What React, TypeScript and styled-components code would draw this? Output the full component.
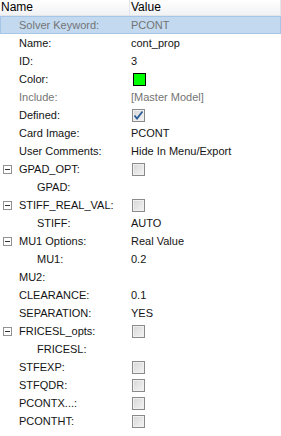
import styled, { createGlobalStyle } from 'styled-components';

const Global = createGlobalStyle`
    body {
        margin: 0;
        background: #ffffff;
        font-family: "Liberation Sans", Arial, sans-serif;
    }
`;

const Grid = styled.div`
    width: 281px;
    height: 436px;
    background: #ffffff;
    font-size: 11px;
    color: #141414;
    overflow: hidden;
`;

const Header = styled.div`
    display: grid;
    grid-template-columns: 130px 1fr;
    height: 16px;
    background: linear-gradient(#ffffff, #f1f2f4);
    border-bottom: 1px solid #e3e5e8;
    box-sizing: border-box;
    font-size: 12px;
`;

const HeaderCell = styled.div`
    padding-left: 1px;
    line-height: 15px;
    color: #000;
    border-right: 1px solid #e3e5e8;
`;

const Row = styled.div<{ $selected?: boolean }>`
    display: grid;
    grid-template-columns: 130px 1fr;
    height: 18px;
    align-items: center;
    background: ${p => (p.$selected ? '#c2d9f0' : 'transparent')};
    box-shadow: ${p => (p.$selected ? 'inset 0 0 0 1px #a6c6e8' : 'none')};
`;

const NameCell = styled.div<{ $indent: number; $muted?: boolean }>`
    display: flex;
    align-items: center;
    height: 18px;
    padding-left: ${p => p.$indent}px;
    color: ${p => (p.$muted ? '#747474' : '#141414')};
    white-space: nowrap;
`;

const ValueCell = styled.div<{ $muted?: boolean }>`
    display: flex;
    align-items: center;
    height: 18px;
    padding-left: 1px;
    color: ${p => (p.$muted ? '#747474' : '#141414')};
    white-space: nowrap;
`;

const Expander = styled.span`
    position: relative;
    width: 9px;
    height: 9px;
    margin-left: 3px;
    margin-right: 7px;
    border: 1px solid #919191;
    box-sizing: border-box;
    background: #fff;
    &::after {
        content: '';
        position: absolute;
        left: 1px;
        right: 1px;
        top: 3px;
        height: 1px;
        background: #333;
    }
`;

const Check = styled.span`
    display: inline-flex;
    align-items: center;
    justify-content: center;
    width: 13px;
    height: 13px;
    margin-left: 1px;
    box-sizing: border-box;
    border: 1px solid #8a8a8a;
    background: linear-gradient(135deg, #d6d6d6, #f4f4f4);
    box-shadow: inset 0 0 0 1px #f0f0f0;
`;

const Swatch = styled.span`
    width: 13px;
    height: 13px;
    margin-left: 2px;
    box-sizing: border-box;
    border: 1px solid #000;
    background: #00ff00;
`;

type Item = {
    name: string;
    level?: number;
    group?: boolean;
    value?: string;
    kind?: 'text' | 'check' | 'checked' | 'color';
    muted?: boolean;
    selected?: boolean;
};

const items: Item[] = [
    { name: 'Solver Keyword:', value: 'PCONT', muted: true, selected: true },
    { name: 'Name:', value: 'cont_prop' },
    { name: 'ID:', value: '3' },
    { name: 'Color:', kind: 'color' },
    { name: 'Include:', value: '[Master Model]', muted: true },
    { name: 'Defined:', kind: 'checked' },
    { name: 'Card Image:', value: 'PCONT' },
    { name: 'User Comments:', value: 'Hide In Menu/Export' },
    { name: 'GPAD_OPT:', group: true, kind: 'check' },
    { name: 'GPAD:', level: 1 },
    { name: 'STIFF_REAL_VAL:', group: true, kind: 'check' },
    { name: 'STIFF:', level: 1, value: 'AUTO' },
    { name: 'MU1 Options:', group: true, value: 'Real Value' },
    { name: 'MU1:', level: 1, value: '0.2' },
    { name: 'MU2:' },
    { name: 'CLEARANCE:', value: '0.1' },
    { name: 'SEPARATION:', value: 'YES' },
    { name: 'FRICESL_opts:', group: true, kind: 'check' },
    { name: 'FRICESL:', level: 1 },
    { name: 'STFEXP:', kind: 'check' },
    { name: 'STFQDR:', kind: 'check' },
    { name: 'PCONTX...:', kind: 'check' },
    { name: 'PCONTHT:', kind: 'check' },
];

const CheckMark = () => (
    <svg width="11" height="11" viewBox="0 0 11 11">
        <path d="M1.5 5.5 L4 8.5 L9.5 1.5" fill="none" stroke="#2a5c9a" strokeWidth="1.8" />
    </svg>
);

const renderValue = (item: Item) => {
    if (item.kind === 'color') return <Swatch />;
    if (item.kind === 'check') return <Check />;
    if (item.kind === 'checked') return <Check><CheckMark /></Check>;
    return item.value ?? '';
};

export default function App() {
    return (
        <Grid>
            <Global />
            <Header>
                <HeaderCell>Name</HeaderCell>
                <HeaderCell>Value</HeaderCell>
            </Header>
            {items.map((item, i) => (
                <Row key={i} $selected={item.selected}>
                    <NameCell $indent={item.group ? 0 : item.level ? 37 : 19} $muted={item.muted}>
                        {item.group && <Expander />}
                        {item.name}
                    </NameCell>
                    <ValueCell $muted={item.muted}>{renderValue(item)}</ValueCell>
                </Row>
            ))}
        </Grid>
    );
}
